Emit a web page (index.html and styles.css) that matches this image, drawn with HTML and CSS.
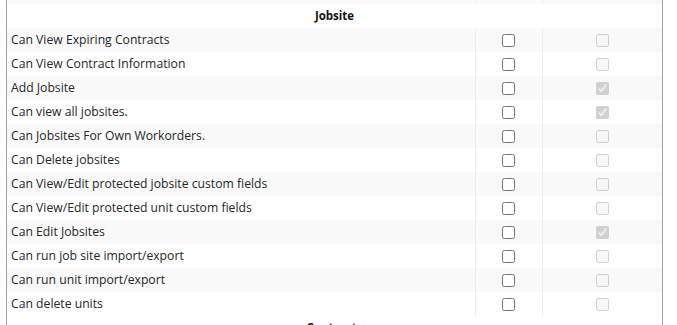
FILE: index.html
```html
<!DOCTYPE html>
<html>
<head>
<meta charset="utf-8" />
<title>Permissions</title>
<link rel="stylesheet" href="styles.css">
</head>
<body>
<div class="perm_box">
	<table class="perm_table">
		<colgroup>
			<col class="c_name">
			<col class="c_a">
			<col class="c_b">
		</colgroup>
		<tr class="tail"><td></td><td></td><td></td></tr>
		<tr class="group"><th colspan="3">Jobsite</th></tr>
		<tr><td>Can View Expiring Contracts</td><td><input type="checkbox"></td><td><input type="checkbox" disabled></td></tr>
		<tr><td>Can View Contract Information</td><td><input type="checkbox"></td><td><input type="checkbox" disabled></td></tr>
		<tr><td>Add Jobsite</td><td><input type="checkbox"></td><td><input type="checkbox" disabled checked></td></tr>
		<tr><td>Can view all jobsites.</td><td><input type="checkbox"></td><td><input type="checkbox" disabled checked></td></tr>
		<tr><td>Can Jobsites For Own Workorders.</td><td><input type="checkbox"></td><td><input type="checkbox" disabled></td></tr>
		<tr><td>Can Delete jobsites</td><td><input type="checkbox"></td><td><input type="checkbox" disabled></td></tr>
		<tr><td>Can View/Edit protected jobsite custom fields</td><td><input type="checkbox"></td><td><input type="checkbox" disabled></td></tr>
		<tr><td>Can View/Edit protected unit custom fields</td><td><input type="checkbox"></td><td><input type="checkbox" disabled></td></tr>
		<tr><td>Can Edit Jobsites</td><td><input type="checkbox"></td><td><input type="checkbox" disabled checked></td></tr>
		<tr><td>Can run job site import/export</td><td><input type="checkbox"></td><td><input type="checkbox" disabled></td></tr>
		<tr><td>Can run unit import/export</td><td><input type="checkbox"></td><td><input type="checkbox" disabled></td></tr>
		<tr><td>Can delete units</td><td><input type="checkbox"></td><td><input type="checkbox" disabled></td></tr>
		<tr class="group"><th colspan="3">Contracts</th></tr>
	</table>
</div>
</body>
</html>
```

FILE: styles.css
```css
*{margin:0;padding:0;}
body{background:#fff;overflow:hidden;}
.perm_box{
	margin-left:6px;
	width:655px;
	border-left:1px solid #a3a3a3;
	border-right:1px solid #a3a3a3;
}
.perm_table{
	width:655px;
	border-collapse:collapse;
	table-layout:fixed;
	font:12.2px "Open Sans",Arial,sans-serif;
	line-height:24px;
	color:#262626;
}
.c_name{width:468px;}
.c_a{width:67px;}
.c_b{width:120px;}
.perm_table td{
	height:24px;
	padding:0 0 0 4px;
	vertical-align:middle;
}
.perm_table td + td{
	border-left:1px solid #ececec;
	text-align:center;
	padding:0;
}
.perm_table tr:nth-child(odd) td{background:#f9f9f9;}
.perm_table .tail td{height:4px;line-height:4px;background:#fff;}
.perm_table th{
	height:24px;
	font-size:11.5px;
	font-weight:bold;
	text-align:center;
	color:#111;
}
.perm_table input{
	display:block;
	margin:0 auto;
	width:13px;
	height:13px;
}
```
